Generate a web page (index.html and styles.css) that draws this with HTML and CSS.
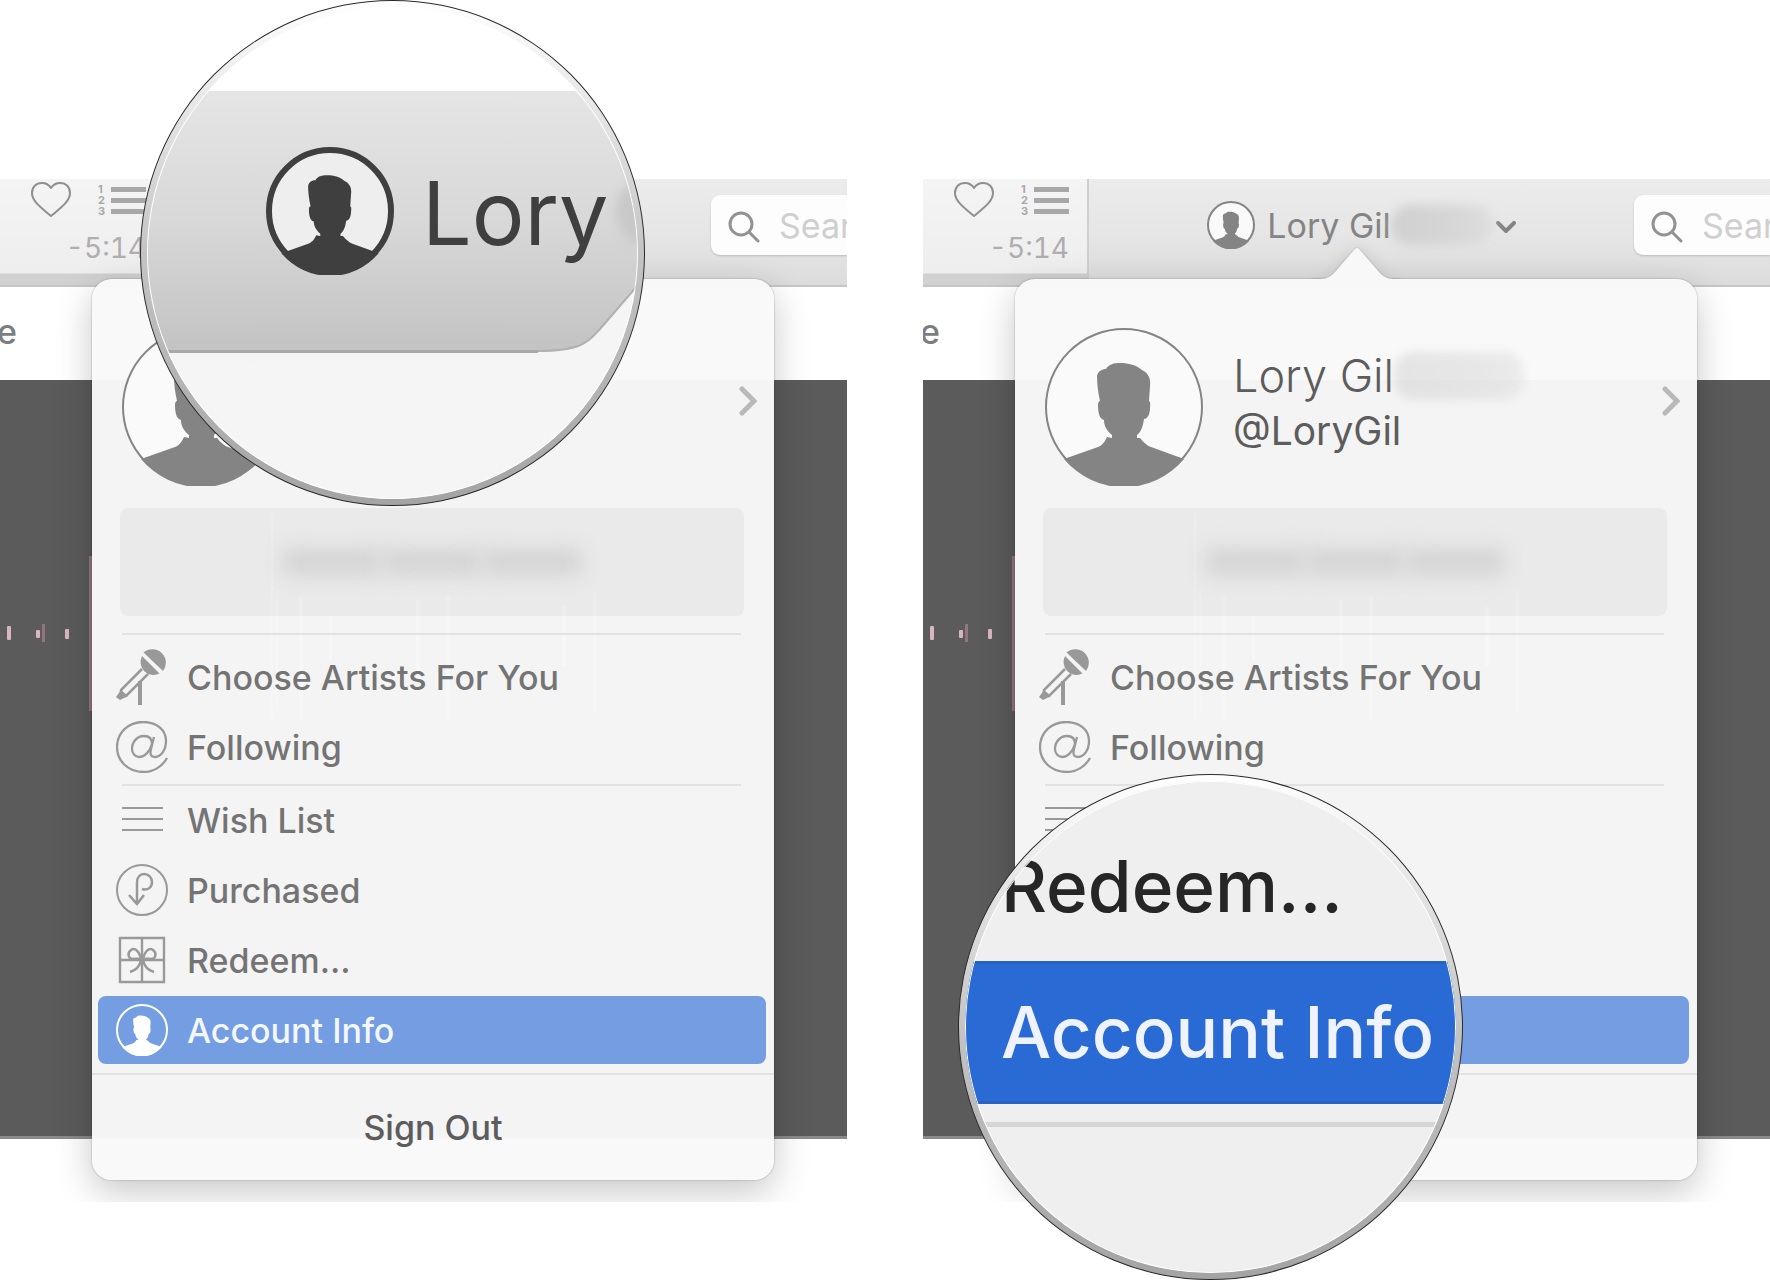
FILE: index.html
```html
<!DOCTYPE html>
<html lang="en">
<head>
<meta charset="utf-8">
<title>Account menu</title>
<link rel="stylesheet" href="styles.css">
</head>
<body>
<svg class="sprite" aria-hidden="true">
  <symbol id="person" viewBox="0 0 158 158">
    <path d="M52 48C53 43 57 41 61 41C64 36 69 35 75 35C84 35 91 37 97 42C103 45 106 50 105 58L104 73C106 74 105 78 105 80C105 85 103 91 99 91C98 97 97 103 92 107L92 110L95 110C99 115 103 118 106 119L139 131A78 78 0 0 1 19 131L53 119C58 117 60 113 62 109L67 110L67 107C61 102 59 97 59 92C54 91 53 83 53 77C53 74 54 73 55 73C53 64 52 56 52 48Z"/>
  </symbol>
  <symbol id="heart" viewBox="0 0 42 36">
    <path d="M21 34C13 27 2 20 2 11C2 5 6 1 12 1C16 1 19 3 21 6C23 3 26 1 30 1C36 1 40 5 40 11C40 20 29 27 21 34Z" fill="none" stroke="currentColor" stroke-width="2" stroke-linejoin="round"/>
  </symbol>
  <symbol id="mic" viewBox="0 0 52 60">
    <path d="M27.5 5.5A13.5 13.5 0 0 1 47 24Z" fill="currentColor"/>
    <path d="M26 9A13 13 0 0 0 43.500 26.500Z" fill="currentColor"/>
    <path d="M26 22L5 43L5 49L10 49L32 27" fill="none" stroke="currentColor" stroke-width="2.5"/>
    <path d="M0 50L5 43L12 49L4 53Z" fill="currentColor"/>
    <path d="M24 34V58" stroke="currentColor" stroke-width="4"/>
  </symbol>
  <symbol id="at" viewBox="0 0 52 52">
    <path d="M51 37C46 46 37 51 28 51C12 51 1 40 1 26C1 11 13 1 27 1C41 1 50 9 50 20C50 29 45 36 39 36C34 36 34 32 35 28L38 16M36 23C36 18 33 15 28 15C21 15 16 21 16 28C16 32 19 36 23 36C29 36 34 30 36 23" fill="none" stroke="currentColor" stroke-width="2.3"/>
  </symbol>
  <symbol id="lines" viewBox="0 0 52 52">
    <path d="M6 14H47M6 25H47M6 36H47" stroke="currentColor" stroke-width="2.2"/>
  </symbol>
  <symbol id="purchased" viewBox="0 0 52 52">
    <circle cx="26" cy="26" r="25" fill="none" stroke="currentColor" stroke-width="2"/>
    <path d="M21 40V19C21 13 24 10 28 10C33 10 36 14 36 18C36 23 32 27 26 25M13 31L21 40L28 31" fill="none" stroke="currentColor" stroke-width="2.5"/>
  </symbol>
  <symbol id="gift" viewBox="0 0 52 52">
    <path d="M4 4H48V48H4ZM26 4V48M4 26H48" fill="none" stroke="currentColor" stroke-width="2.4"/>
    <path d="M25 26C24 18 19 13 15 16C11 19 12 25 17 25C21 25 24 24 25 26M27 26C28 18 33 13 37 16C41 19 40 25 35 25C31 25 28 24 27 26M25 26C24 31 21 36 14 38M27 26C28 31 31 36 38 38" fill="none" stroke="currentColor" stroke-width="2.5"/>
  </symbol>
  <symbol id="wave" viewBox="0 0 620 220">
    <g fill="#d9b5c3"><rect x="7" y="116" width="4" height="14" rx="1"/><rect x="36" y="120" width="4" height="8" rx="1"/><rect x="65" y="119" width="4" height="10" rx="1"/></g>
    <g fill="#94757f"><rect x="42" y="114" width="3" height="18"/><rect x="89" y="46" width="3" height="155"/></g>
    <g fill="#fff" fill-opacity=".5"><rect x="271" y="0" width="2" height="212"/><rect x="276" y="80" width="2" height="120"/><rect x="299" y="86" width="4" height="124"/><rect x="329" y="106" width="3" height="44"/><rect x="416" y="90" width="4" height="80"/><rect x="446" y="86" width="4" height="124"/><rect x="562" y="96" width="4" height="60"/><rect x="593" y="83" width="3" height="120"/></g>
  </symbol>
</svg>

<main class="comparison">
  <section class="step">
    <div class="shot">
      <div class="window">
        <header class="toolbar">
          <div class="player">
            <div class="player-icons">
              <svg class="heart"><use href="#heart"/></svg>
              <ol class="queue"><li>1</li><li>2</li><li>3</li></ol>
            </div>
            <span class="time">-5:14</span>
          </div>
          <button class="account" type="button" aria-label="Account"></button>
          <label class="search">
            <svg viewBox="0 0 32 32"><circle cx="13" cy="13" r="11"/><path d="M21 21L30 30"/></svg>
            <input type="search" placeholder="Search" aria-label="Search">
          </label>
        </header>
        <nav class="tabs"><a href="#">e</a></nav>
        <div class="stage"><svg class="wave"><use href="#wave"/></svg></div>
      </div>
      <div class="popover">
        <button class="profile" type="button" aria-label="Profile">
          <svg class="avatar" viewBox="0 0 158 158"><circle cx="79" cy="79" r="78"/><use href="#person" width="158" height="158"/></svg>
          <span class="who"></span>
          <svg class="chevron-right" viewBox="0 0 18 30"><path d="M3 3L15 15L3 27"/></svg>
        </button>
        <div class="email"><i></i><i></i><i></i></div>
        <ul class="menu">
          <li><button type="button"><svg class="mic"><use href="#mic"/></svg>Choose Artists For You</button></li>
          <li><button type="button"><svg><use href="#at"/></svg>Following</button></li>
        </ul>
        <ul class="menu">
          <li><button type="button"><svg><use href="#lines"/></svg>Wish List</button></li>
          <li><button type="button"><svg><use href="#purchased"/></svg>Purchased</button></li>
          <li><button type="button"><svg><use href="#gift"/></svg>Redeem...</button></li>
          <li><button class="selected" type="button"><svg viewBox="0 0 52 52"><circle cx="26" cy="26" r="25"/><use href="#person" width="52" height="52"/></svg>Account Info</button></li>
        </ul>
        <button class="sign-out" type="button">Sign Out</button>
      </div>
    </div>
    <div class="loupe loupe-account">
      <div class="lens">
        <div class="lens-bar">
          <svg class="lens-avatar" viewBox="0 0 128 128"><circle cx="64" cy="64" r="61"/><use href="#person" width="128" height="128"/></svg>
          <span>Lory</span><i class="smudge"></i>
        </div>
        <svg class="lens-corner" viewBox="0 0 100 90"><path class="fill" d="M0 88C46 88 52 77 62 66L100 22V90H0Z"/><path class="edge" d="M0 88C46 88 52 77 62 66L100 22"/></svg>
      </div>
    </div>
  </section>

  <section class="step">
    <div class="shot">
      <div class="window">
        <header class="toolbar">
          <div class="player">
            <div class="player-icons">
              <svg class="heart"><use href="#heart"/></svg>
              <ol class="queue"><li>1</li><li>2</li><li>3</li></ol>
            </div>
            <span class="time">-5:14</span>
          </div>
          <button class="account" type="button">
            <svg class="avatar-small" viewBox="0 0 48 48"><circle cx="24" cy="24" r="23"/><use href="#person" width="48" height="48"/></svg>
            <span>Lory Gil</span><i class="smudge"></i>
            <svg class="chevron-down" viewBox="0 0 20 12"><path d="M2 2L10 10L18 2"/></svg>
          </button>
          <label class="search">
            <svg viewBox="0 0 32 32"><circle cx="13" cy="13" r="11"/><path d="M21 21L30 30"/></svg>
            <input type="search" placeholder="Search" aria-label="Search">
          </label>
        </header>
        <nav class="tabs"><a href="#">e</a></nav>
        <div class="stage"><svg class="wave"><use href="#wave"/></svg></div>
      </div>
      <div class="popover">
        <svg class="arrow" viewBox="0 0 120 48"><path d="M16 49V48H24C32 48 35 45 39 41L58 19Q61 15 64 19L83 41C87 45 90 48 98 48H104V49Z"/></svg>
        <button class="profile" type="button">
          <svg class="avatar" viewBox="0 0 158 158"><circle cx="79" cy="79" r="78"/><use href="#person" width="158" height="158"/></svg>
          <span class="who"><span class="name">Lory Gil<i class="smudge"></i></span><span class="handle">@LoryGil</span></span>
          <svg class="chevron-right" viewBox="0 0 18 30"><path d="M3 3L15 15L3 27"/></svg>
        </button>
        <div class="email"><i></i><i></i><i></i></div>
        <ul class="menu">
          <li><button type="button"><svg class="mic"><use href="#mic"/></svg>Choose Artists For You</button></li>
          <li><button type="button"><svg><use href="#at"/></svg>Following</button></li>
        </ul>
        <ul class="menu">
          <li><button type="button" aria-label="Wish List"><svg><use href="#lines"/></svg></button></li>
          <li><button type="button" aria-label="Purchased"></button></li>
          <li><button type="button" aria-label="Redeem"></button></li>
          <li><button class="selected" type="button" aria-label="Account Info"></button></li>
        </ul>
        <button class="sign-out" type="button" aria-label="Sign Out"></button>
      </div>
    </div>
    <div class="loupe loupe-info">
      <div class="lens">
        <div class="lens-row">Redeem...</div>
        <div class="lens-row lens-selected">Account Info</div>
      </div>
    </div>
  </section>
</main>
</body>
</html>
```

FILE: styles.css
```css
* { box-sizing: border-box; }

body {
  margin: 0;
  background: #fff;
  font-family: Inter, "Liberation Sans", sans-serif;
  font-size: 34px;
  color: #747474;
}

button {
  border: 0;
  padding: 0;
  background: none;
  font: inherit;
  color: inherit;
  text-align: left;
}

ul, ol { list-style: none; margin: 0; padding: 0; }

svg { flex: none; fill: currentColor; }

.sprite { position: absolute; width: 0; height: 0; }

.comparison {
  display: grid;
  grid-template-columns: minmax(0, 1fr) minmax(0, 1fr);
  gap: 76px;
}

.step { position: relative; padding: 179px 0 78px; }

.shot { display: grid; overflow: hidden; }

.window, .popover { grid-area: 1 / 1; min-width: 0; }

.window {
  display: flex;
  flex-direction: column;
  padding-bottom: 63px;
}

/* Toolbar */
.toolbar {
  display: flex;
  align-items: flex-start;
  height: 108px;
  background: linear-gradient(#ececec, #e6e6e6 50%, #dcdcdc);
  border-bottom: 2px solid #c6c6c6;
}

.player {
  flex: none;
  display: flex;
  flex-direction: column;
  width: 166px;
  height: 106px;
  padding: 3px 18px 0 30px;
  background: linear-gradient(#f4f4f4, #eee 94px, #d0d0d0 95px, #d2d2d2);
  border-right: 2px solid #cfcfcf;
}

.player-icons { display: flex; justify-content: space-between; }

.heart { width: 42px; height: 36px; color: #8f8f8f; }

.queue {
  display: flex;
  flex-direction: column;
  padding-top: 2px;
  font-size: 11px;
  font-weight: 700;
  line-height: 11px;
  color: #a8a8a8;
}

.queue li { display: flex; align-items: center; justify-content: space-between; width: 48px; }
.queue li::after { content: ""; width: 35px; height: 5px; background: #a8a8a8; }

.time {
  align-self: flex-end;
  margin-top: 13px;
  font-size: 28px;
  font-variant-numeric: tabular-nums;
  line-height: 34px;
  color: #b0adb1;
}

.account {
  flex: 1;
  display: flex;
  align-items: center;
  justify-content: center;
  height: 92px;
  color: #848484;
}

.account span { margin-left: 12px; }

.avatar-small { width: 48px; height: 48px; }
.avatar-small circle { fill: #fafafa; stroke: #848484; stroke-width: 2; }

.smudge {
  width: 102px;
  height: 40px;
  border-radius: 20px;
  background: linear-gradient(90deg, #d0d0d0, #d6d6d6 60%, #dedede);
  filter: blur(5px);
}

.chevron-down { width: 20px; height: 12px; margin: 4px 0 0 3px; }
.chevron-down path { fill: none; stroke: #848484; stroke-width: 4; stroke-linecap: round; }

.search {
  flex: none;
  display: flex;
  align-items: center;
  width: 136px;
  height: 60px;
  margin-top: 16px;
  padding-left: 17px;
  gap: 19px;
  border-radius: 9px 0 0 9px;
  background: #fdfdfd;
  box-shadow: 0 1px 2px #bbb;
}

.search svg { width: 32px; height: 32px; margin-top: 4px; fill: none; stroke: #929292; stroke-width: 3; stroke-linecap: round; }

.search input {
  flex: none;
  width: 160px;
  border: 0;
  padding: 0;
  background: none;
  font: inherit;
}

.search input::placeholder { color: #cfcfcf; opacity: 1; }

.tabs { height: 93px; padding-top: 21px; overflow: hidden; }
.tabs a { margin-left: -3px; color: #7d7d80; font-weight: 500; text-decoration: none; line-height: 48px; }

.stage {
  flex: 1;
  padding-top: 130px;
  background: #5b5b5b;
  border-bottom: 3px solid #8a8a8a;
  overflow: hidden;
}

.wave { display: block; width: 620px; height: 220px; }

/* Popover */
.popover {
  position: relative;
  margin: 100px 73px 22px 92px;
  border-radius: 20px;
  background: rgba(249, 249, 249, .97);
  box-shadow: 0 0 2px rgba(0, 0, 0, .35), 0 12px 36px rgba(0, 0, 0, .22);
}

.arrow {
  position: absolute;
  top: -48px;
  left: calc(50% - 60px);
  width: 120px;
  height: 48px;
  overflow: hidden;
  color: #f8f8f8;
}

.arrow path { filter: drop-shadow(0 0 1px rgba(0, 0, 0, .2)) drop-shadow(0 2px 8px rgba(0, 0, 0, .14)); }

.profile {
  display: flex;
  align-items: center;
  width: 100%;
  height: 229px;
  padding: 26px 17px 0 30px;
  color: #5c5c5c;
}

.avatar { width: 158px; height: 158px; color: #848484; }
.avatar circle { fill: #fafafa; stroke: #848484; stroke-width: 2; }

.who { flex: 1; display: flex; flex-direction: column; padding: 0 0 10px 30px; }
.name { display: flex; align-items: center; font-size: 45px; font-weight: 300; line-height: 58px; }
.name .smudge { width: 130px; height: 48px; opacity: .5; }
.handle { font-size: 39px; line-height: 52px; }

.chevron-right { width: 18px; height: 30px; margin-bottom: 12px; }
.chevron-right path { fill: none; stroke: #b9b9b9; stroke-width: 5; stroke-linecap: round; }

.email {
  display: flex;
  align-items: center;
  justify-content: center;
  height: 108px;
  margin: 0 30px 17px 28px;
  border-radius: 8px;
  background: rgba(0, 0, 0, .04);
}

.email i { width: 100px; height: 28px; border-radius: 8px; background: #d4d4d4; filter: blur(10px); }

.menu {
  display: grid;
  gap: 2px;
  padding: 0 8px 0 6px;
  font-weight: 500;
}

.menu::before { content: ""; height: 2px; margin: 0 25px 0 24px; background: #e2e2e2; }

.email + .menu { padding-bottom: 3px; }
.email + .menu::before { margin-bottom: 6px; }
.menu + .menu::before { margin-bottom: -3px; }

.menu li { display: flex; }

.menu button {
  display: flex;
  align-items: center;
  gap: 19px;
  width: 100%;
  height: 68px;
  padding-left: 18px;
  border-radius: 8px;
}

.menu svg { width: 52px; height: 52px; color: #999; }
.menu .mic { height: 60px; }

.menu .selected { background: #759de1; color: #f3f7ff; }
.selected svg { color: #fff; }
.selected circle { fill: none; stroke: #fff; stroke-width: 2; }

.sign-out {
  display: block;
  width: 100%;
  height: 107px;
  margin-top: 9px;
  border-top: 2px solid #e1e3e4;
  color: #5c5c5c;
  font-weight: 500;
  text-align: center;
}

/* Magnified circles */
.loupe {
  position: absolute;
  width: 505px;
  height: 506px;
  padding: 6px;
  border: 1px solid #2a2a2a;
  border-radius: 50%;
  background: linear-gradient(#fff, #c4c4c4 50%, #a4a4a4);
  font-weight: 500;
}

.loupe-account { top: 0; left: 140px; }
.loupe-info { bottom: 0; left: 35px; }

.lens {
  position: relative;
  height: 100%;
  border-radius: 50%;
  overflow: hidden;
}

.lens::after {
  content: "";
  position: absolute;
  inset: 0;
  border-radius: 50%;
  box-shadow: inset 0 0 0 1px #fff;
}

.loupe-account .lens { padding-top: 84px; background: linear-gradient(#fff 300px, #f3f3f3 300px, #f5f5f5 370px, #f5f5f5); }

.lens-bar {
  display: flex;
  align-items: center;
  height: 262px;
  padding: 0 0 20px 119px;
  background: linear-gradient(#e5e5e5, #d8d8d8 50%, #c3c3c3);
  border-bottom: 3px solid #a9a9a9;
  color: #3f3f3f;
  font-size: 88px;
  font-weight: 400;
}

.lens-avatar { width: 128px; height: 128px; margin-right: 28px; }
.lens-avatar circle { fill: #eee; stroke: #3f3f3f; stroke-width: 6; }
.lens-bar span { padding-top: 4px; }
.lens-bar .smudge { flex: none; height: 72px; margin-left: 8px; border-radius: 36px; background: #c8c8c8; }

.lens-corner { position: absolute; right: 0; top: 256px; width: 100px; height: 90px; }
.lens-corner .fill { fill: #f5f5f5; }
.lens-corner .edge { fill: none; stroke: #b0b0b0; stroke-width: 2; }

.loupe-info .lens { padding-top: 37px; background: #efefef; }

.lens-row {
  height: 143px;
  padding-left: 36px;
  color: #262626;
  font-size: 71px;
  line-height: 136px;
  white-space: nowrap;
}

.lens-selected {
  background: #2a6ad4;
  color: #eef3ff;
  border-top: 3px solid #2863c2;
  border-bottom: 3px solid #2863c2;
  box-shadow: 0 18px 0 #efefef, 0 23px 0 #d6d6d6;
}
```
